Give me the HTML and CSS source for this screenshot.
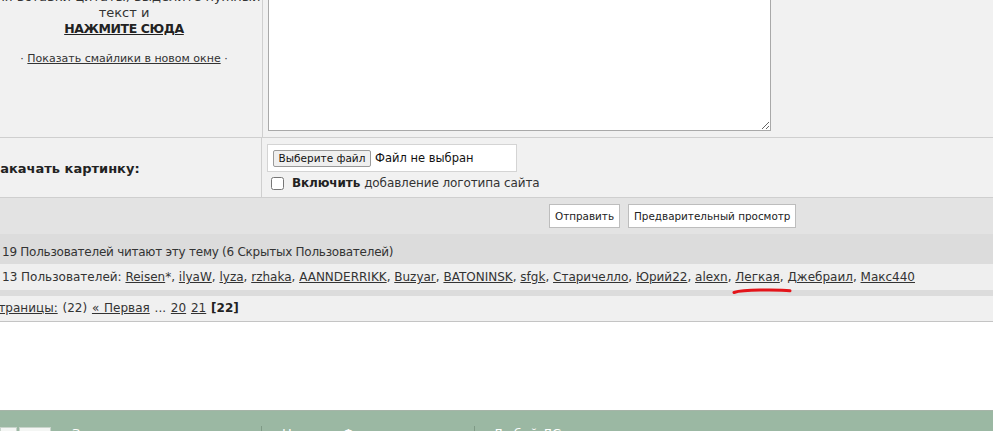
FILE: index.html
```html
<!DOCTYPE html>
<html lang="ru">
<head>
<meta charset="utf-8">
<title>Ответ в тему</title>
<link rel="stylesheet" href="styles.css">
</head>
<body>
<div class="page">
  <div class="form">
    <div class="row row-main">
      <div class="cell-left hint">
        <div class="hint-text">для вставки цитаты, выделите нужный<br>текст и<br><a class="quote-link" href="#">НАЖМИТЕ СЮДА</a></div>
        <div class="smiles">· <a href="#">Показать смайлики в новом окне</a> ·</div>
      </div>
      <div class="cell-right editor-cell">
        <textarea class="editor"></textarea>
      </div>
    </div>
    <div class="row row-upload">
      <div class="cell-left upload-label">Закачать картинку:</div>
      <div class="cell-right upload-cell">
        <div class="file-box"><span class="file-btn">Выберите файл</span><span class="file-name">Файл не выбран</span></div>
        <label class="logo-opt"><input type="checkbox" class="check"><b>Включить</b> добавление логотипа сайта</label>
      </div>
    </div>
    <div class="actions">
      <button class="btn" type="button">Отправить</button>
      <button class="btn" type="button">Предварительный просмотр</button>
    </div>
  </div>

  <div class="online">
    <div class="online-head">19 Пользователей читают эту тему (6 Скрытых Пользователей)</div>
    <div class="online-list">13 Пользователей: <a href="#">Reisen</a>*, <a href="#">ilyaW</a>, <a href="#">lyza</a>, <a href="#">rzhaka</a>, <a href="#">AANNDERRIKK</a>, <a href="#">Buzyar</a>, <a href="#">BATONINSK</a>, <a href="#">sfgk</a>, <a href="#">Старичелло</a>, <a href="#">Юрий22</a>, <a href="#">alexn</a>, <span class="marked"><a href="#">Легкая</a>,<svg class="scribble" width="62" height="8" viewBox="0 0 62 8"><path d="M2 5.5 C8 3.6 16 3.2 28 3.1 C40 3 50 2.8 58 3.8" fill="none" stroke="#e3141a" stroke-width="3" stroke-linecap="round"/></svg></span> <a href="#">Джебраил</a>, <a href="#">Макс440</a></div>
    <div class="online-foot"></div>
  </div>

  <div class="pages"><a href="#">Страницы:</a> (22) <a href="#">« Первая</a> ... <a href="#">20</a> <a href="#">21</a> <b>[22]</b></div>

  <div class="footer">
    <div class="foot-tabs"><span class="tab tab-a"></span><span class="tab tab-b"></span></div>
    <div class="foot-item foot-first">Закрыть</div>
    <div class="foot-item foot-second">Новости Форума</div>
    <div class="foot-item foot-third">Любой ЛС</div>
  </div>
</div>
</body>
</html>
```

FILE: styles.css
```css
html, body {
  margin: 0;
  padding: 0;
  background: #ffffff;
  overflow: hidden;
}

body {
  width: 993px;
  height: 431px;
  font-family: "DejaVu Sans", Verdana, sans-serif;
  font-size: 12px;
  color: #333333;
}

a {
  color: #333333;
  text-decoration: underline;
}

.page {
  margin-left: -14px;
  margin-top: -20px;
  width: 1400px;
}

/* reply form table */
.form {
  background: #f1f1f1;
}

.row {
  display: flex;
  border-bottom: 1px solid #cfcfcf;
}

.cell-left {
  width: 276px;
  flex: none;
  border-right: 1px solid #cfcfcf;
}

.cell-right {
  flex: 1;
}

.row-main {
  height: 157px;
}

.hint {
  text-align: center;
  padding-top: 9px;
}

.hint-text {
  font-size: 13px;
  line-height: 16px;
}

.quote-link {
  font-weight: bold;
  font-size: 12.5px;
  letter-spacing: -0.4px;
  color: #222222;
}

.smiles {
  margin-top: 15px;
  font-size: 11px;
  line-height: 14px;
}

.editor-cell {
  display: flex;
  align-items: flex-end;
  padding: 0 0 6px 5px;
}

.editor {
  display: block;
  width: 503px;
  height: 160px;
  margin: 0;
  box-sizing: border-box;
  border: 1px solid #a9a9a9;
  background: #ffffff;
  resize: both;
}

.row-upload {
  height: 59px;
}

.upload-label {
  display: flex;
  align-items: center;
  padding-left: 5px;
  padding-top: 1px;
  box-sizing: border-box;
  font-size: 13px;
  font-weight: bold;
  color: #222222;
}

.upload-cell {
  padding: 6px 0 0 5px;
}

.file-box {
  width: 250px;
  height: 28px;
  box-sizing: border-box;
  border: 1px solid #d4d4d4;
  background: #ffffff;
  display: flex;
  align-items: center;
  padding-left: 5px;
}

.file-btn {
  height: 17px;
  width: 98px;
  box-sizing: border-box;
  border: 1px solid #9a9a9a;
  border-radius: 2px;
  background: #efefef;
  font-size: 10.5px;
  line-height: 15px;
  text-align: center;
  color: #111111;
}

.file-name {
  margin-left: 4px;
  font-size: 11.5px;
  color: #111111;
}

.logo-opt {
  display: flex;
  align-items: center;
  margin-top: 4px;
  margin-left: 4px;
  font-size: 12px;
  letter-spacing: -0.1px;
  color: #333333;
}

.logo-opt b {
  color: #222222;
  margin-right: 4px;
}

.check {
  width: 13px;
  height: 13px;
  margin: 0 8px 0 0;
}

.actions {
  height: 36px;
  background: #e3e3e3;
  display: flex;
  align-items: center;
  gap: 8px;
  padding-left: 563px;
}

.btn {
  height: 24px;
  padding: 0 5px;
  border: 1px solid #bdbdbd;
  background: #ffffff;
  font-family: "DejaVu Sans", Verdana, sans-serif;
  font-size: 10.4px;
  color: #222222;
  margin: 0;
}

/* who is reading */
.online-head {
  background: #dcdcdc;
  height: 30px;
  line-height: 36px;
  overflow: hidden;
  padding-left: 16px;
  letter-spacing: -0.25px;
}

.online-list {
  background: #efefef;
  height: 26px;
  line-height: 26px;
  padding-left: 16px;
  white-space: nowrap;
}

.marked {
  position: relative;
}

.scribble {
  position: absolute;
  left: -3px;
  top: 17px;
}

.online-foot {
  height: 6px;
  background: #dcdcdc;
}

.pages {
  background: #f0f0f0;
  height: 25px;
  line-height: 24px;
  padding-left: 4px;
  border-bottom: 1px solid #c4c4c4;
  word-spacing: 1px;
}

.pages b {
  color: #222222;
}

/* page footer bar */
.footer {
  margin-top: 88px;
  height: 40px;
  background: #9bb8a3;
  border-top: 1px solid #a6b4a8;
  position: relative;
  color: #ffffff;
  font-size: 13px;
}

.foot-tabs {
  position: absolute;
  left: 14px;
  top: 16px;
  display: flex;
  gap: 2px;
}

.tab {
  display: block;
  height: 20px;
  background: #f4f6f4;
  border: 1px solid #c9d4cb;
}

.tab-a { width: 15px; }
.tab-b { width: 30px; }

.foot-item {
  position: absolute;
  top: 15px;
  height: 24px;
  white-space: nowrap;
}

.foot-first { left: 86px; }
.foot-second { left: 275px; padding-left: 20px; border-left: 1px solid #7f9a86; }
.foot-third { left: 488px; padding-left: 18px; border-left: 1px solid #7f9a86; }
```
